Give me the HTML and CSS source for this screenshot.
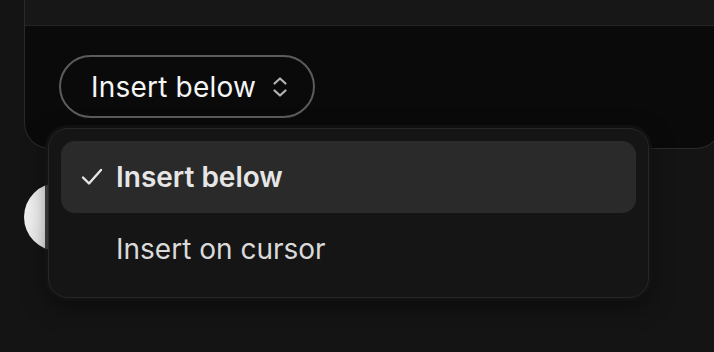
FILE: index.html
```html
<!DOCTYPE html>
<html>
<head>
<meta charset="utf-8">
<link rel="stylesheet" href="styles.css">
</head>
<body>
<div class="page">
  <div class="card">
    <div class="card-top"></div>
    <div class="card-body">
      <button class="select">
        <span class="select-label">Insert below</span>
        <svg class="chev" width="18" height="24" viewBox="0 0 18 24" fill="none" stroke="#b5b5b5" stroke-width="2.2" stroke-linecap="round" stroke-linejoin="round">
          <path d="M3.5 8.5 L9 3.5 L14.5 8.5"/>
          <path d="M3.5 15.5 L9 20.5 L14.5 15.5"/>
        </svg>
      </button>
    </div>
  </div>
  <div class="avatar"></div>
  <div class="menu">
    <div class="item active">
      <svg class="check" width="22" height="20" viewBox="0 0 22 20" fill="none" stroke="#e6e6e6" stroke-width="2.4" stroke-linecap="round" stroke-linejoin="round">
        <path d="M2 10.5 L8 16.5 L20 3"/>
      </svg>
      <span>Insert below</span>
    </div>
    <div class="item">
      <span class="spacer"></span>
      <span>Insert on cursor</span>
    </div>
  </div>
</div>
</body>
</html>
```
FILE: styles.css
```css
* { box-sizing: border-box; }
html, body {
  margin: 0;
  padding: 0;
  background: #141414;
  width: 714px;
  height: 352px;
  overflow: hidden;
  font-family: "Inter", "Noto Sans", sans-serif;
}
.page {
  position: relative;
  width: 714px;
  height: 352px;
}
.card {
  margin-left: 24px;
  width: 698px;
  border: 1px solid #2a2a2a;
  border-top: none;
  border-radius: 0 0 26px 26px;
  background: #0a0a0a;
  overflow: hidden;
}
.card-top {
  height: 26px;
  background: #171717;
  border-bottom: 1px solid #242424;
}
.card-body {
  padding: 29px 0 30px 34px;
}
.select {
  display: flex;
  align-items: center;
  gap: 15px;
  height: 63px;
  padding: 0 24px 0 30px;
  background: #0a0a0a;
  border: 2px solid #5c5c5c;
  border-radius: 32px;
  font-family: inherit;
  color: #f5f5f5;
  font-size: 28px;
  font-weight: 400;
  letter-spacing: 0.2px;
  cursor: pointer;
}
.select-label { line-height: 1; }
.chev { display: block; }
.avatar {
  margin: 34px 0 0 24px;
  width: 68px;
  height: 68px;
  border-radius: 50%;
  background: radial-gradient(circle at 40% 40%, #f7f7f7, #e8e8e8);
}
.menu {
  position: absolute;
  left: 48px;
  top: 128px;
  width: 601px;
  padding: 12px;
  background: #151515;
  border: 1px solid #272727;
  border-radius: 20px;
  box-shadow: 0 0 0 3px rgba(20,20,20,0.8), 0 8px 24px rgba(0,0,0,0.5);
  display: flex;
  flex-direction: column;
}
.item {
  display: flex;
  align-items: center;
  height: 72px;
  padding-left: 20px;
  gap: 13px;
  border-radius: 14px;
  font-size: 28px;
  color: #dadada;
  letter-spacing: 0;
}
.item.active {
  background: #2a2a2a;
  font-weight: 600;
  color: #e6e6e6;
}
.check { display: block; }
.spacer { width: 22px; }
```
